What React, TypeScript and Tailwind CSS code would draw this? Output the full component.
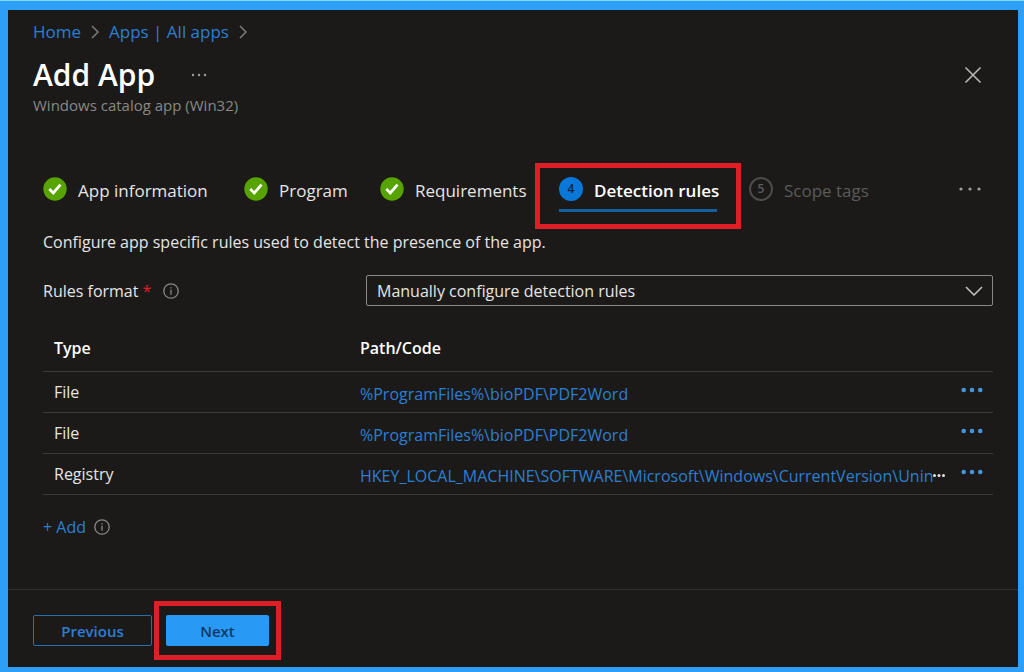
import { useState } from 'react';

type Step = { label: string; state: 'done' | 'current' | 'upcoming'; width: string };

const steps: Step[] = [
    { label: 'App information', state: 'done', width: 'w-[169px]' },
    { label: 'Program', state: 'done', width: 'w-[104px]' },
    { label: 'Requirements', state: 'done', width: 'w-[147px]' },
    { label: 'Detection rules', state: 'current', width: 'w-[158px]' },
    { label: 'Scope tags', state: 'upcoming', width: 'w-[124px]' },
];

const rules = [
    { type: 'File', path: '%ProgramFiles%\\bioPDF\\PDF2Word', cut: false },
    { type: 'File', path: '%ProgramFiles%\\bioPDF\\PDF2Word', cut: false },
    { type: 'Registry', path: 'HKEY_LOCAL_MACHINE\\SOFTWARE\\Microsoft\\Windows\\CurrentVersion\\Unin', cut: true },
];

function Dots({ className, r = 2 }: { className: string; r?: number }) {
    return (
        <svg viewBox="0 0 24 6" className={className} fill="currentColor" aria-hidden="true">
            <circle cx="3" cy="3" r={r} />
            <circle cx="12" cy="3" r={r} />
            <circle cx="21" cy="3" r={r} />
        </svg>
    );
}

function Chevron() {
    return (
        <svg viewBox="0 0 10 16" className="w-[10px] h-4 text-[#7d7b79]" fill="none" stroke="currentColor" strokeWidth="1.5" aria-hidden="true">
            <path d="M2 2l6 6-6 6" />
        </svg>
    );
}

function InfoIcon() {
    return (
        <svg viewBox="0 0 16 16" className="size-4 shrink-0 text-[#8a8886]" fill="none" stroke="currentColor" strokeWidth="1.3" aria-hidden="true">
            <circle cx="8" cy="8" r="7.2" />
            <path d="M8 6.8v5" />
            <path d="M8 4.2v1.4" />
        </svg>
    );
}

function StepIcon({ state, number }: { state: Step['state']; number: number }) {
    if (state === 'done') {
        return (
            <svg viewBox="0 0 24 24" className="size-6 shrink-0" fill="none" aria-hidden="true">
                <circle cx="12" cy="12" r="11.7" fill="#57a300" />
                <path d="M6.3 12l4 4 7.2-8.4" stroke="#fff" strokeWidth="2.7" />
            </svg>
        );
    }
    if (state === 'current') {
        return <span className="size-6 shrink-0 rounded-full bg-[#0a78d8] text-[#0b2440] text-xs leading-6 font-semibold text-center">{number}</span>;
    }
    return <span className="size-6 shrink-0 rounded-full border-2 border-[#4c4b4a] text-[#5c5b5a] text-xs leading-5 font-semibold text-center">{number}</span>;
}

export default function App() {
    const [format, setFormat] = useState('manual');

    return (
        <div className="min-h-screen flex flex-col border-t border-[#7fdcfb] bg-[#2d9ff7] font-['Open_Sans',sans-serif] text-base leading-6 text-[#e6e5e4]">
            <div className="flex-1 flex flex-col mt-[9px] ml-2 mr-[6px] mb-[5px] bg-[#1b1a19]">
                <header className="pl-[25px] pr-9 pt-[10px]">
                    <nav aria-label="Breadcrumb" className="flex items-center gap-[9px] text-[17px] text-[#2b7fd3]">
                        <a href="#home">Home</a>
                        <Chevron />
                        <a href="#apps">Apps | All apps</a>
                        <Chevron />
                    </nav>
                    <div className="mt-[11px] flex items-center">
                        <h1 className="text-[30px] leading-10 font-semibold text-white">Add App</h1>
                        <button aria-label="More options" className="ml-9 text-[#a19f9d]"><Dots className="w-4 h-1" r={1.8} /></button>
                        <button aria-label="Close" className="ml-auto text-[#b8b6b4]">
                            <svg viewBox="0 0 18 18" className="size-[18px]" fill="none" stroke="currentColor" strokeWidth="1.6" aria-hidden="true">
                                <path d="M1.500 1.500l15 15M16.500 1.500l-15 15" />
                            </svg>
                        </button>
                    </div>
                    <p className="text-[15px] leading-5 text-[#8a8886]">Windows catalog app (Win32)</p>
                </header>

                <main className="flex-1 pl-[35px] pr-[25px] pt-[62px] pb-12">
                    <div className="flex items-start gap-8">
                        {steps.map((step, i) => (
                            <button
                                key={step.label}
                                aria-current={step.state === 'current' ? 'step' : undefined}
                                className={`relative flex items-center gap-[11px] pb-2 border-b-3 text-[17px] whitespace-nowrap ${step.width} ${step.state === 'current' ? 'border-[#145f9f] font-semibold text-white' : 'border-transparent'} ${step.state === 'upcoming' ? 'text-[#5c5b5a]' : ''}`}
                            >
                                <StepIcon state={step.state} number={i + 1} />
                                <span className="pt-1 leading-5">{step.label}</span>
                                {step.state === 'current' && <span className="absolute -inset-x-6 -top-[14px] -bottom-5 border-[5px] border-[#df1f26]" />}
                            </button>
                        ))}
                        <button aria-label="More steps" className="ml-auto mr-[11px] flex h-6 items-center text-[#a19f9d]"><Dots className="w-6 h-[6px]" r={1.6} /></button>
                    </div>

                    <p className="mt-[18px]">Configure app specific rules used to detect the presence of the app.</p>

                    <div className="mt-[21px] flex items-center">
                        <div className="w-[323px] shrink-0 flex items-center">
                            <label htmlFor="rules-format">Rules format <span className="text-[#e0202a]">*</span></label>
                            <button aria-label="About rules format" className="ml-3"><InfoIcon /></button>
                        </div>
                        <div className="relative flex-1">
                            <select id="rules-format" value={format} onChange={(e) => setFormat(e.target.value)} className="block w-full h-[31px] appearance-none rounded-xs border border-[#8a8886] bg-[#1b1a19] px-[10px] leading-6">
                                <option value="manual">Manually configure detection rules</option>
                            </select>
                            <svg viewBox="0 0 18 10" className="pointer-events-none absolute right-[10px] top-[11px] w-[18px] h-[10px] text-[#c8c6c4]" fill="none" stroke="currentColor" strokeWidth="1.5" aria-hidden="true">
                                <path d="M1 1l8 8 8-8" />
                            </svg>
                        </div>
                    </div>

                    <table className="mt-5 w-full table-fixed border-collapse text-left">
                        <thead>
                            <tr className="h-[45px] border-b border-[#3b3a39] text-white">
                                <th className="w-[317px] pl-[11px] font-semibold">Type</th>
                                <th className="font-semibold">Path/Code</th>
                                <th className="w-11"></th>
                            </tr>
                        </thead>
                        <tbody>
                            {rules.map((rule, i) => (
                                <tr key={i} className="h-[41px] border-b border-[#3b3a39]">
                                    <td className="pl-[11px]">{rule.type}</td>
                                    <td className="pt-1">
                                        <div className="flex items-center whitespace-nowrap">
                                            <a href="#rule" className="text-[#2b7fd3]">{rule.path}</a>
                                            {rule.cut && <Dots className="w-3 h-[3px]" r={3} />}
                                        </div>
                                    </td>
                                    <td className="pb-1">
                                        <button aria-label="Rule options" className="ml-3 block text-[#4396de]"><Dots className="w-[22px] h-[6px]" r={2.5} /></button>
                                    </td>
                                </tr>
                            ))}
                        </tbody>
                    </table>

                    <div className="mt-5 flex items-center gap-2">
                        <button className="text-[#2b7fd3]">+ Add</button>
                        <button aria-label="About adding rules"><InfoIcon /></button>
                    </div>
                </main>

                <footer className="flex gap-[14px] border-t border-[#302f2e] pl-[25px] pt-[25px] pb-[21px] text-[15px] font-semibold">
                    <button className="w-[119px] h-[31px] rounded-xs border border-[#2670b0] text-[#2b7fd3]">Previous</button>
                    <button className="relative w-[103px] h-[31px] rounded-xs bg-[#2899f5] text-[#12395f]">
                        Next
                        <span className="absolute -inset-x-3 -inset-y-[14px] border-[5px] border-[#df1f26]" />
                    </button>
                </footer>
            </div>
        </div>
    );
}
